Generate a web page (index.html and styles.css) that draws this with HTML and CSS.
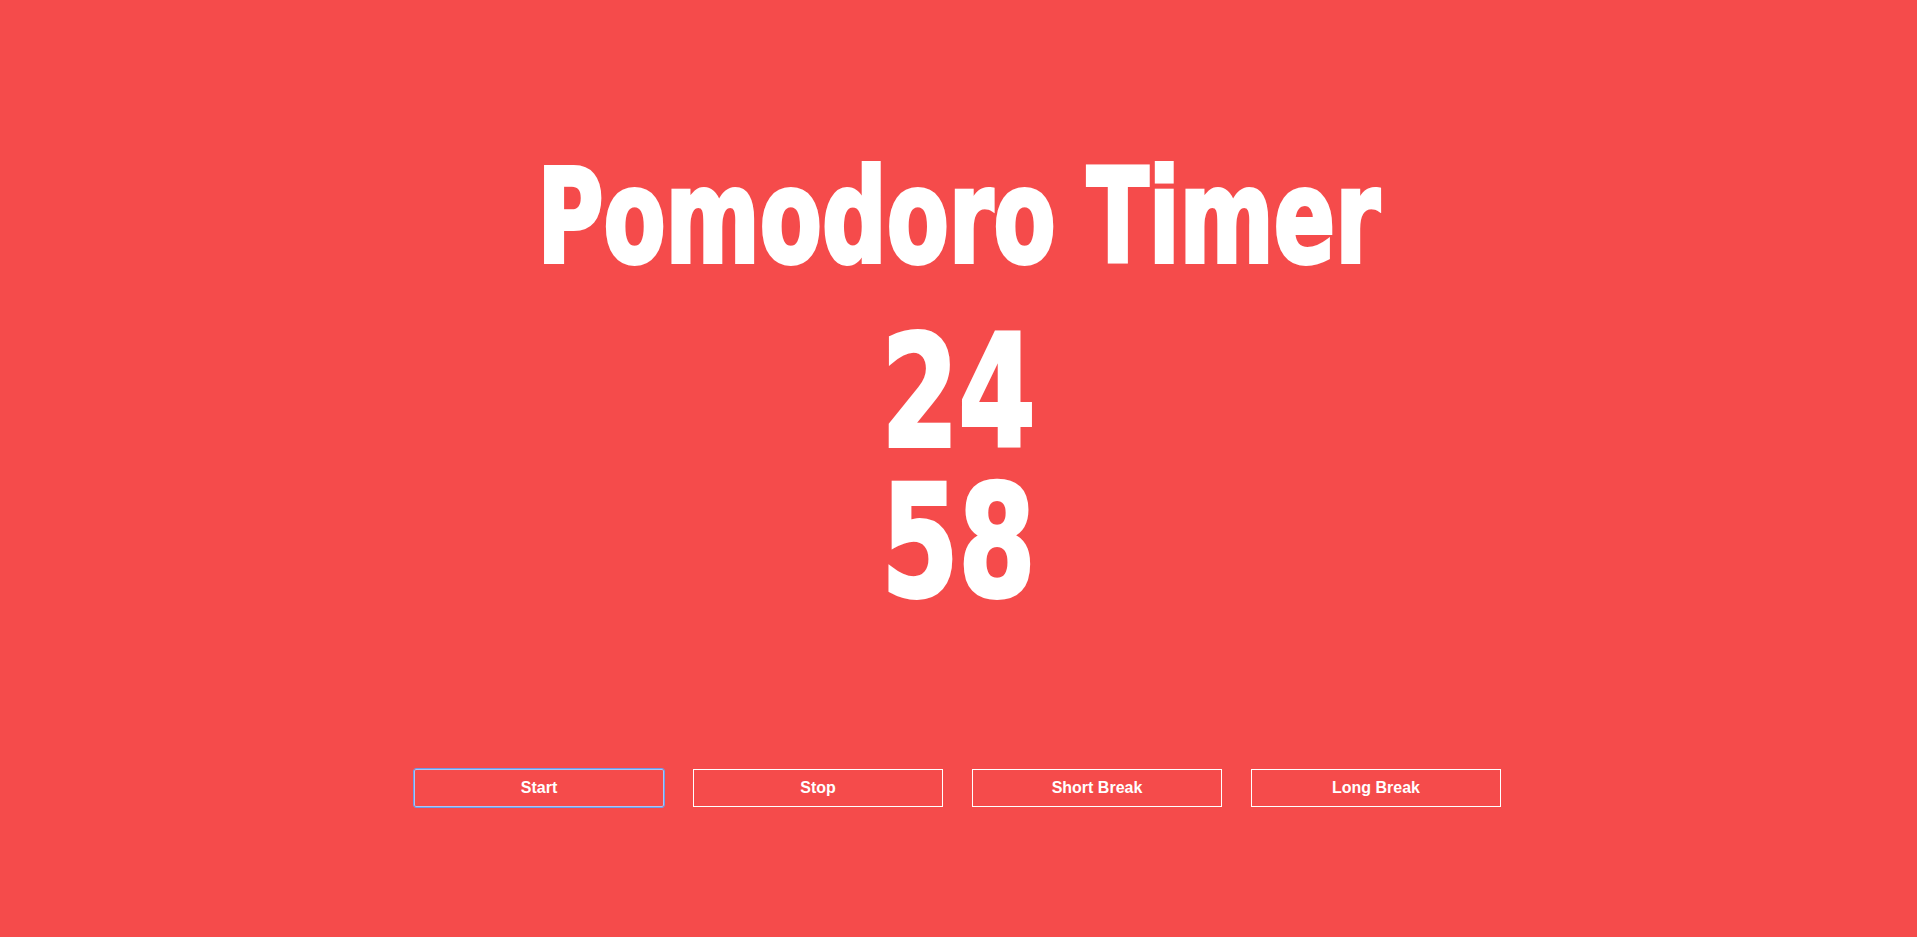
FILE: index.html
```html
<!DOCTYPE html>
<html lang="en">
<head>
<meta charset="utf-8">
<title>Pomodoro Timer</title>
<link rel="stylesheet" href="styles.css">
</head>
<body>
  <main class="app">
    <h1 class="title"><span class="title-text">Pomodoro Timer</span></h1>
    <div class="timer">
      <div class="timer-line"><span class="digits">24</span></div>
      <div class="timer-line"><span class="digits">58</span></div>
    </div>
    <div class="controls">
      <button class="btn btn-focused">Start</button>
      <button class="btn">Stop</button>
      <button class="btn">Short Break</button>
      <button class="btn">Long Break</button>
    </div>
  </main>
</body>
</html>
```
FILE: styles.css
```css
html, body {
  margin: 0;
  padding: 0;
  height: 100%;
  background: #f54b4b;
  overflow: hidden;
}

.app {
  display: flex;
  flex-direction: column;
  align-items: center;
  color: #ffffff;
}

.title {
  margin: 168px 0 0 0;
  height: 100px;
  font-family: "DejaVu Sans Condensed", "DejaVu Sans", sans-serif;
  font-stretch: condensed;
  font-weight: 700;
  font-size: 100.5px;
  line-height: 100px;
  white-space: nowrap;
}

.title-text {
  display: inline-block;
  transform: scale(1, 1.29);
  -webkit-text-stroke: 3px #ffffff;
}

.timer {
  margin-top: 50px;
  display: flex;
  flex-direction: column;
  align-items: center;
  font-family: "DejaVu Sans Condensed", "DejaVu Sans", sans-serif;
  font-stretch: condensed;
  font-weight: 700;
  font-size: 123px;
  line-height: 150px;
}

.timer-line {
  height: 150px;
}

.digits {
  display: inline-block;
  line-height: 115px;
  transform: scale(1, 1.265);
  -webkit-text-stroke: 3px #ffffff;
}

.controls {
  margin-top: 151px;
  margin-right: 2px;
  display: flex;
  gap: 29px;
}

.btn {
  width: 250px;
  height: 38px;
  box-sizing: border-box;
  background: transparent;
  border: 1px solid #ffffff;
  border-radius: 0;
  color: #ffffff;
  font-family: "Liberation Sans", Arial, sans-serif;
  font-weight: 700;
  font-size: 16px;
  padding: 0;
  cursor: pointer;
}

.btn-focused {
  border-color: #a9c6f7;
  border-radius: 2px;
  outline: 1px solid #6e9be9;
  outline-offset: 0;
}
```
